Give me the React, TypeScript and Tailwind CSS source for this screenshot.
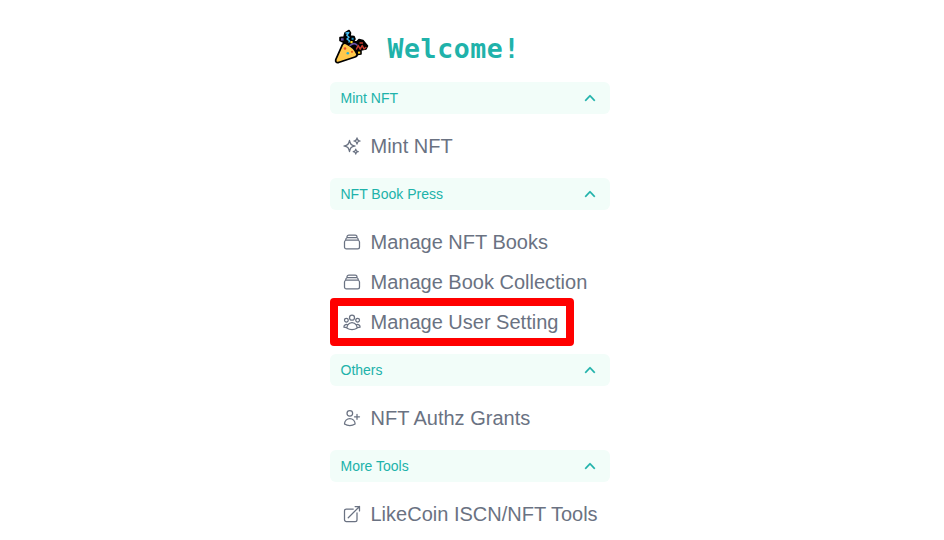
import type { ReactNode } from "react";
import {
  HiOutlineSparkles,
  HiOutlineRectangleStack,
  HiOutlineUserGroup,
  HiOutlineUserPlus,
  HiOutlineArrowTopRightOnSquare,
} from "react-icons/hi2";
import type { IconType } from "react-icons";

function PartyPopper() {
  return (
    <svg viewBox="0 0 36 36" className="h-9 w-9 shrink-0" strokeLinejoin="round" strokeLinecap="round">
      <path
        d="M12 4L16 1.5L17.5 4L17 7L21 7.5L22 10L20 13L24 12.5L26 10.5L30 11.5L32 14L34.5 17L33 20L28 21L28 25L25 25.5L22 23L14 15L7 11.5L7 8.5L11 8Z"
        fill="#000"
        stroke="#000"
        strokeWidth="1.6"
      />
      <path
        d="M9.5 15.5Q11 13.5 13 14.5Q21 18 24.2 25.3Q24.3 27.3 22 28L5.5 33.5Q2 34 2.8 30.5Z"
        fill="#ffc84a"
        stroke="#000"
        strokeWidth="1.8"
      />
      <path d="M13 4L15.8 3.6L13.8 6.2L16 8.2L14 10L16.5 11.8L16 13" fill="none" stroke="#43b9ee" strokeWidth="1.5" />
      <path d="M17 16.5Q21 13 24 16" fill="none" stroke="#6951a8" strokeWidth="1.6" />
      <path d="M23.5 20L25.2 16.5L27.2 20.2L29.2 16.5L31 20L32.8 18.5" fill="none" stroke="#c83a2e" strokeWidth="1.5" />
      <path d="M27 14L29.5 14" fill="none" stroke="#c83a2e" strokeWidth="1.4" />
      <rect x="8" y="9.2" width="2.6" height="2.4" fill="#6951a8" />
      <rect x="18.6" y="8.8" width="2" height="2" fill="#1e8fc0" />
      <rect x="17.4" y="12" width="2.2" height="2.2" fill="#ffe11a" />
      <rect x="25" y="22.6" width="2.2" height="2" fill="#ffd21a" />
      <circle cx="12" cy="19.5" r="1.3" fill="#f04b2d" />
      <circle cx="14.8" cy="24.3" r="1.3" fill="#28afd5" />
      <circle cx="19" cy="22.8" r="1.1" fill="#e65c20" />
    </svg>
  );
}

function ChevronUp() {
  return (
    <svg viewBox="0 0 20 20" className="h-5 w-5" fill="currentColor" stroke="currentColor" strokeWidth="0.35">
      <path
        fillRule="evenodd"
        clipRule="evenodd"
        d="M14.77 12.79a.75.75 0 0 1-1.06-.02L10 8.832 6.29 12.77a.75.75 0 1 1-1.08-1.04l4.25-4.5a.75.75 0 0 1 1.08 0l4.25 4.5a.75.75 0 0 1-.02 1.06Z"
      />
    </svg>
  );
}

function Section({ title, children }: { title: string; children: ReactNode }) {
  return (
    <section>
      <button className="flex h-8 w-full items-center justify-between rounded-md bg-[#f2fdf9] pr-2.5 pl-[10.5px] text-sm text-[#20b2aa]">
        <span>{title}</span>
        <ChevronUp />
      </button>
      <ul className="py-3">{children}</ul>
    </section>
  );
}

function Item({ icon: Icon, label, highlighted = false }: { icon: IconType; label: string; highlighted?: boolean }) {
  return (
    <li className="relative flex h-10 items-center gap-[8.5px] pl-3 text-xl text-gray-500">
      <Icon className="h-5 w-5 shrink-0" />
      <span className="whitespace-nowrap">{label}</span>
      {highlighted && (
        <span className="absolute -top-1 left-0 h-12 w-[244px] rounded-[4px] border-8 border-[#ff0000]" />
      )}
    </li>
  );
}

export default function App() {
  return (
    <main className="flex h-[540px] justify-center overflow-hidden bg-white pr-1 font-['Liberation_Sans',Arial,sans-serif]">
      <div className="w-[280px]">
        <header className="flex h-[82px] items-center gap-[19px] pt-3 pl-[2.5px]">
          <PartyPopper />
          <h1 className="pt-[3px] font-['DejaVu_Sans_Mono',monospace] text-[26.5px] font-bold tracking-[0.6px] text-[#20b2aa]">
            Welcome!
          </h1>
        </header>
        <Section title="Mint NFT">
          <Item icon={HiOutlineSparkles} label="Mint NFT" />
        </Section>
        <Section title="NFT Book Press">
          <Item icon={HiOutlineRectangleStack} label="Manage NFT Books" />
          <Item icon={HiOutlineRectangleStack} label="Manage Book Collection" />
          <Item icon={HiOutlineUserGroup} label="Manage User Setting" highlighted />
        </Section>
        <Section title="Others">
          <Item icon={HiOutlineUserPlus} label="NFT Authz Grants" />
        </Section>
        <Section title="More Tools">
          <Item icon={HiOutlineArrowTopRightOnSquare} label="LikeCoin ISCN/NFT Tools" />
        </Section>
      </div>
    </main>
  );
}
